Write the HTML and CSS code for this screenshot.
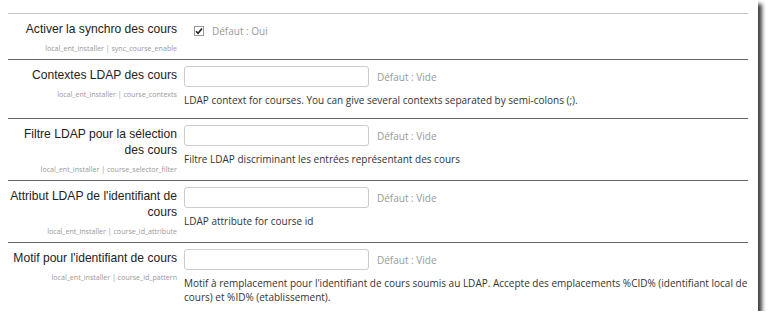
FILE: index.html
```html
<!DOCTYPE html>
<html lang="fr">
<head>
    <meta charset="UTF-8">
    <title>Réglages local_ent_installer</title>
    <link rel="stylesheet" href="styles.css">
</head>
<body>
    <div class="window">
        <div class="settings">
            <div class="setting first">
                <div class="label-col">
                    <div class="label">Activer la synchro des cours</div>
                    <div class="key">local_ent_installer | sync_course_enable</div>
                </div>
                <div class="field-col">
                    <div class="field check-field">
                        <span class="checkbox">
                            <svg width="8" height="8" viewBox="0 0 8 8"><path d="M1 4.2 L3 6.2 L7 1.5" fill="none" stroke="#222" stroke-width="1.6"/></svg>
                        </span>
                        <span class="default">Défaut : Oui</span>
                    </div>
                </div>
            </div>
            <div class="setting">
                <div class="label-col">
                    <div class="label">Contextes LDAP des cours</div>
                    <div class="key">local_ent_installer | course_contexts</div>
                </div>
                <div class="field-col">
                    <div class="field">
                        <input class="text-input" type="text">
                        <span class="default">Défaut : Vide</span>
                    </div>
                    <div class="desc">LDAP context for courses. You can give several contexts separated by semi-colons (;).</div>
                </div>
            </div>
            <div class="setting">
                <div class="label-col">
                    <div class="label">Filtre LDAP pour la sélection des cours</div>
                    <div class="key">local_ent_installer | course_selector_filter</div>
                </div>
                <div class="field-col">
                    <div class="field">
                        <input class="text-input" type="text">
                        <span class="default">Défaut : Vide</span>
                    </div>
                    <div class="desc">Filtre LDAP discriminant les entrées représentant des cours</div>
                </div>
            </div>
            <div class="setting">
                <div class="label-col">
                    <div class="label">Attribut LDAP de l'identifiant de cours</div>
                    <div class="key">local_ent_installer | course_id_attribute</div>
                </div>
                <div class="field-col">
                    <div class="field">
                        <input class="text-input" type="text">
                        <span class="default">Défaut : Vide</span>
                    </div>
                    <div class="desc">LDAP attribute for course id</div>
                </div>
            </div>
            <div class="setting last">
                <div class="label-col">
                    <div class="label">Motif pour l'identifiant de cours</div>
                    <div class="key">local_ent_installer | course_id_pattern</div>
                </div>
                <div class="field-col">
                    <div class="field">
                        <input class="text-input" type="text">
                        <span class="default">Défaut : Vide</span>
                    </div>
                    <div class="desc">Motif à remplacement pour l'identifiant de cours soumis au LDAP. Accepte des emplacements %CID% (identifiant local de cours) et %ID% (etablissement).</div>
                </div>
            </div>
        </div>
    </div>
</body>
</html>
```

FILE: styles.css
```css
body {
    margin: 0;
    padding: 0;
    background: #fff;
    font-family: "Open Sans", sans-serif;
    color: #333;
}
.window {
    width: 758px;
    height: 311px;
    background: #fff;
    box-shadow: 4px 4px 4px rgba(0, 0, 0, 0.75);
    overflow: hidden;
}
.settings {
    padding: 13px 10px 0 8px;
}
.setting {
    display: grid;
    grid-template-columns: 169px 1fr;
    column-gap: 7px;
    padding: 6px 0 6px;
    border-top: 1px solid #666;
}
.setting.first {
    border-top-color: #c4c4c4;
}
.label-col {
    text-align: right;
    padding-top: 1px;
}
.label {
    font-family: "Liberation Sans", Arial, sans-serif;
    font-size: 12.1px;
    line-height: 16px;
    color: #222;
}
.key {
    margin-top: 6px;
    font-size: 7.1px;
    line-height: 10px;
    color: #999;
}
.field {
    display: flex;
    align-items: center;
    gap: 8px;
}
.check-field {
    padding: 4px 0 0 10px;
}
.checkbox {
    display: flex;
    align-items: center;
    justify-content: center;
    width: 8px;
    height: 8px;
    border: 1px solid #999;
    background: #fff;
}
.text-input {
    width: 185px;
    height: 21px;
    box-sizing: border-box;
    margin: 0;
    border: 1px solid #ccc;
    border-radius: 3px;
    background: #fff;
}
.default {
    font-size: 10px;
    color: #999;
}
.desc {
    margin: 6px 0 5px;
    font-size: 10px;
    line-height: 14px;
    color: #333;
}
```
